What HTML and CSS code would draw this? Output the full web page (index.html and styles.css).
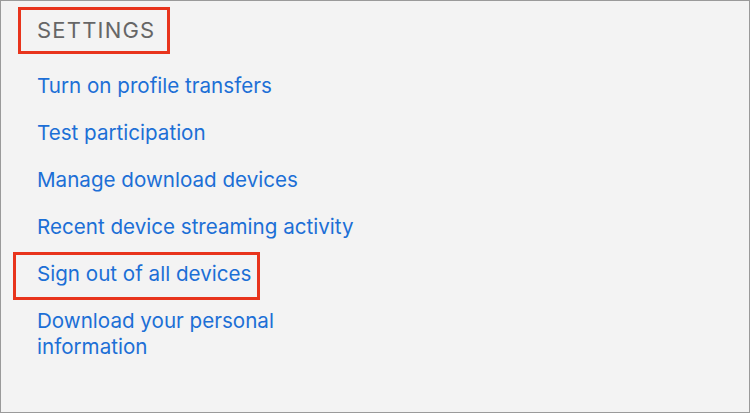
FILE: index.html
```html
<html lang="en">
<head>
    <meta charset="UTF-8">
    <meta name="viewport" content="width=device-width, initial-scale=1.0">
    <title>Settings</title>
    <link rel="stylesheet" href="styles.css">
</head>
<body>
    <div class="panel">
        <h2 class="title marked-title">SETTINGS</h2>
        <div class="links">
            <a href="#" class="link">Turn on profile transfers</a>
            <a href="#" class="link">Test participation</a>
            <a href="#" class="link">Manage download devices</a>
            <a href="#" class="link">Recent device streaming activity</a>
            <a href="#" class="link marked">Sign out of all devices</a> <!-- destacado -->
            <a href="#" class="link">Download your personal information</a>
        </div>
    </div>
</body>
</html>
```

FILE: styles.css
```css
body {
    margin: 0;
    padding: 0;
    font-family: Inter, "Noto Sans", sans-serif;
    background-color: #f3f3f3;
}

.panel {
    box-sizing: border-box;
    width: 750px;
    height: 413px;
    border: 1px solid #9a9a9a;
    padding: 6px 0 0 36px;
    background-color: #f3f3f3;
}

.title {
    display: inline-block;
    margin: 0 0 0 -19px;
    padding: 0 12px 0 16px;
    font-size: 22px;
    font-weight: normal;
    line-height: 41px;
    letter-spacing: 1.2px;
    color: #666;
}

.marked-title {
    border: 3px solid #e8341c;
}

.links {
    display: flex;
    flex-direction: column;
    align-items: flex-start;
    gap: 21px;
    width: 335px;
    margin-top: 19px;
}

.link {
    font-size: 20.6px;
    line-height: 26px;
    color: #1c6fd6;
    text-decoration: none;
}

/* caixa vermelha em volta do item */
.marked {
    margin: -9px 0 -13px -24px;
    padding: 6px 6px 10px 21px;
    border: 3px solid #e8341c;
}
```
